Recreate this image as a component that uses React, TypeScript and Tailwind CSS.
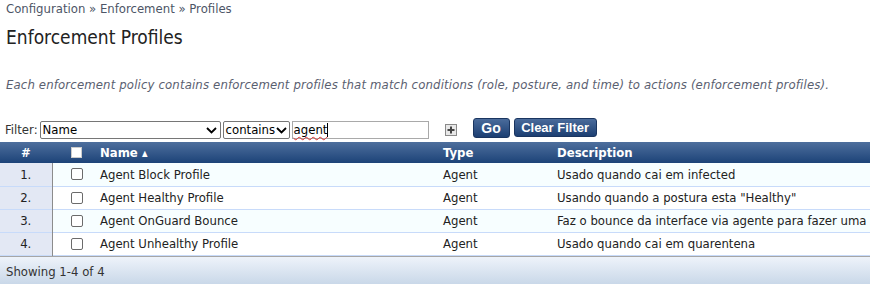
import React from "react";

const font = { fontFamily: '"DejaVu Sans Condensed", "DejaVu Sans", sans-serif' };

const rows = [
  ["1.", "Agent Block Profile", "Agent", "Usado quando cai em infected"],
  ["2.", "Agent Healthy Profile", "Agent", 'Usando quando a postura esta "Healthy"'],
  ["3.", "Agent OnGuard Bounce", "Agent", "Faz o bounce da interface via agente para fazer uma nova avaliação"],
  ["4.", "Agent Unhealthy Profile", "Agent", "Usado quando cai em quarentena"],
];

function Chevron() {
  return (
    <svg width="11" height="7" viewBox="0 0 11 7" className="shrink-0">
      <path d="M1 1 L5.5 5.5 L10 1" fill="none" stroke="#000" strokeWidth="1.8" />
    </svg>
  );
}

export default function App() {
  return (
    <div className="w-[870px] h-[284px] overflow-hidden bg-white text-[13px] text-[#222]" style={font}>
      <div className="px-[6px] pt-[1px] h-[16px] leading-[16px] text-[13px] text-[#4d5566]">
        Configuration » Enforcement » Profiles
      </div>
      <div className="px-[6px] mt-[10px] h-[22px] leading-[22px] text-[19px] text-[#222]">Enforcement Profiles</div>
      <div className="px-[6px] mt-[29px] h-[16px] leading-[16px] italic text-[13px] tracking-[0.15px] text-[#5a6070] whitespace-nowrap">
        Each enforcement policy contains enforcement profiles that match conditions (role, posture, and time) to actions (enforcement profiles).
      </div>
      <div className="flex items-center mt-[26px] h-[22px] pl-[5px]">
        <span className="text-[13px] text-[#333] mr-[2px]">Filter:</span>
        <div className="flex items-center justify-between w-[181px] h-[18px] border border-[#767676] rounded-[2px] pl-[2px] pr-[3px] text-[13px] text-[#000]">
          <span>Name</span>
          <Chevron />
        </div>
        <div className="flex items-center justify-between w-[67px] h-[18px] ml-[2px] border border-[#767676] rounded-[2px] pl-[2px] pr-[2px] text-[13px] text-[#000]">
          <span>contains</span>
          <Chevron />
        </div>
        <div className="flex items-center w-[137px] h-[18px] ml-[2px] border border-[#a9a9a9] pl-[1px] text-[13px] text-[#000]">
          <span className="underline decoration-wavy decoration-[#e03030] decoration-1 underline-offset-2">agent</span>
          <span className="w-px h-[14px] bg-black" />
        </div>
        <div className="ml-[16px] w-[12px] h-[12px] border border-[#8a8a8a] bg-[#e8e8e8] flex items-center justify-center">
          <svg width="8" height="8" viewBox="0 0 8 8">
            <path d="M4 0.5 V7.5 M0.5 4 H7.5" stroke="#444" strokeWidth="2" />
          </svg>
        </div>
        <div className="ml-[16px] flex items-start gap-[4px] self-start -mt-[1px]">
          <button className="w-[37px] h-[20px] rounded-[3px] border border-[#1a3560] bg-gradient-to-b from-[#4a6b9b] to-[#1c3f72] text-white font-bold text-[14px] leading-[18px]" style={{ fontFamily: '"Liberation Sans", Arial, sans-serif' }}>
            Go
          </button>
          <button className="w-[83px] h-[19px] rounded-[3px] border border-[#1a3560] bg-gradient-to-b from-[#4a6b9b] to-[#1c3f72] text-white font-bold text-[13px] leading-[16px]" style={{ fontFamily: '"Liberation Sans", Arial, sans-serif' }}>
            Clear Filter
          </button>
        </div>
      </div>
      <table className="mt-[1px] w-[870px] border-collapse table-fixed">
        <colgroup>
          <col className="w-[52px]" />
          <col className="w-[38px]" />
          <col className="w-[343px]" />
          <col className="w-[114px]" />
          <col />
        </colgroup>
        <thead>
          <tr className="h-[21px] bg-gradient-to-b from-[#4e6f9d] to-[#1c4378] text-white font-bold text-[13px]">
            <th className="text-center font-bold">#</th>
            <th className="text-left pl-[19px]">
              <div className="w-[11px] h-[11px] bg-white border border-[#ccc]" />
            </th>
            <th className="text-left pl-[10px] font-bold">
              Name <span className="text-[8px] align-middle">▲</span>
            </th>
            <th className="text-left pl-[10px] font-bold">Type</th>
            <th className="text-left pl-[10px] font-bold whitespace-nowrap">Description</th>
          </tr>
        </thead>
        <tbody>
          {rows.map((r, i) => (
            <tr key={i} className={`h-[23px] border-b border-[#c8dbfa] ${i % 2 === 0 ? "bg-[#f7feff]" : "bg-white"}`}>
              <td className="text-center bg-[#e3e8f4] border-r border-[#8c8c8c] text-[#222]">{r[0]}</td>
              <td className="pl-[18px]">
                <div className="w-[12px] h-[12px] rounded-[2px] border border-[#6b6b6b] bg-white" />
              </td>
              <td className="pl-[10px] whitespace-nowrap overflow-hidden">{r[1]}</td>
              <td className="pl-[10px]">{r[2]}</td>
              <td className="pl-[10px] whitespace-nowrap overflow-hidden">{r[3]}</td>
            </tr>
          ))}
        </tbody>
      </table>
      <div className="border-t border-[#a6a6a6] h-[29px] bg-gradient-to-b from-[#eef3fa] to-[#c8d7e8] px-[6px] leading-[29px] text-[13px] text-[#333]">
        Showing 1-4 of 4
      </div>
    </div>
  );
}
